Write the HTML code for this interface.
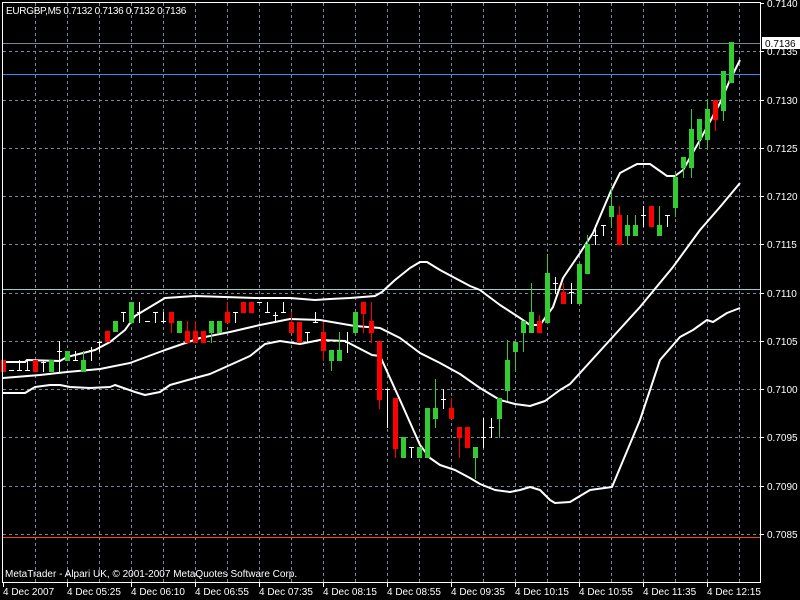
<!DOCTYPE html>
<html><head><meta charset="utf-8"><style>
html,body{margin:0;padding:0;background:#000;width:800px;height:600px;overflow:hidden}
svg{display:block}
text{font-family:"Liberation Sans",sans-serif;font-size:10px;fill:#fff}
</style></head><body>
<svg id="s" width="800" height="600" viewBox="0 0 800 600" shape-rendering="crispEdges">
<rect width="800" height="600" fill="#000"/>
<g id="grid" stroke="#778899" stroke-dasharray="3,3" stroke-width="1"></g>
<line x1="3" y1="43.5" x2="760" y2="43.5" stroke="#778899"/>
<line x1="3" y1="289.5" x2="760" y2="289.5" stroke="#9fc9c9"/>
<line x1="3" y1="74.5" x2="760" y2="74.5" stroke="#1e90ff"/>
<line x1="3" y1="537.5" x2="760" y2="537.5" stroke="#ff4500"/>
<g id="bands" fill="none" stroke="#fff" stroke-width="2" shape-rendering="auto" stroke-linejoin="round"></g>
<g id="c"></g>
<rect x="2.5" y="2.5" width="758" height="580" fill="none" stroke="#fff"/>
<g id="ax" stroke="#fff"></g>
<g id="tx"></g>
<rect x="762" y="37" width="38" height="12" fill="#fff"/>
<text x="765" y="47" style="fill:#000">0.7136</text>
<text x="6" y="14" style="letter-spacing:-0.3px">EURGBP,M5  0.7132 0.7136 0.7132 0.7136</text>
<text x="5" y="577">MetaTrader - Alpari UK, © 2001-2007 MetaQuotes Software Corp.</text>
</svg>
<script>
var NS="http://www.w3.org/2000/svg";
function el(p,n,a,t){var e=document.createElementNS(NS,n);for(var k in a)e.setAttribute(k,a[k]);if(t)e.textContent=t;document.getElementById(p).appendChild(e);return e;}
for(var x=35;x<760;x+=32)el("grid","line",{x1:x+.5,y1:3,x2:x+.5,y2:582});
var prices=["0.7140","0.7135","0.7130","0.7125","0.7120","0.7115","0.7110","0.7105","0.7100","0.7095","0.7090","0.7085"];
for(var i=0;i<12;i++){var y=Math.round(3+i*48.27);if(i>0)el("grid","line",{x1:3,y1:y+.5,x2:760,y2:y+.5});
el("ax","line",{x1:760,y1:y+.5,x2:764,y2:y+.5});el("tx","text",{x:767,y:y+4},prices[i]);}
var dl=["4 Dec 2007","4 Dec 05:25","4 Dec 06:10","4 Dec 06:55","4 Dec 07:35","4 Dec 08:15","4 Dec 08:55","4 Dec 09:35","4 Dec 10:15","4 Dec 10:55","4 Dec 11:35","4 Dec 12:15"];
for(var i=0;i<12;i++){var x=3+64*i;el("ax","line",{x1:x+.5,y1:582,x2:x+.5,y2:587});el("tx","text",{x:x,y:595},dl[i]);}
var up=[[3,362],[25,362],[27,360],[60,361],[67,357],[95,350],[110,342],[125,330],[135,316],[165,298],[195,296],[225,297],[255,298],[290,298],[315,300],[330,299],[350,298],[375,296],[382,292],[395,280],[410,268],[420,262],[427,262],[440,270],[455,278],[470,286],[480,290],[500,305],[520,318],[530,325],[540,325],[553,307],[563,278],[580,253],[593,233],[610,193],[620,173],[637,164],[650,164],[667,176],[675,176],[683,170],[700,140],[720,103],[730,80],[740,60]];
var mid=[[3,378],[40,375],[67,372],[100,369],[130,363],[165,350],[200,338],[230,332],[260,325],[290,319],[320,320],[355,326],[380,328],[400,338],[420,353],[440,363],[460,374],[480,388],[500,400],[515,404],[530,406],[545,401],[560,390],[570,384],[610,340],[640,307],[673,267],[700,230],[720,207],[740,183]];
var lo=[[3,393],[25,393],[35,387],[50,385],[60,385],[70,387],[90,388],[110,387],[115,385],[135,392],[145,395],[160,392],[170,385],[195,378],[210,374],[230,365],[250,356],[265,344],[280,341],[300,344],[320,340],[345,341],[372,355],[380,356],[390,378],[400,400],[420,445],[430,458],[440,465],[455,470],[470,478],[480,484],[495,490],[510,492],[520,490],[530,487],[540,490],[550,500],[555,503],[570,502],[590,490],[612,487],[640,420],[660,360],[680,337],[693,330],[707,320],[713,322],[727,313],[740,308]];
[up,mid,lo].forEach(function(b){el("bands","polyline",{points:b.map(function(p){return p.join(",")}).join(" ")});});
var C=[
["r",360,371,360,371],["d",370,370,370,370],["d",370,370,360,370],["d",370,370,360,370],["r",360,371,360,371],
["d",362,362,360,371],["g",360,371,360,371],["d",351,351,341,371],["g",351,360,351,360],["d",360,360,351,360],
["g",360,371,351,371],["d",350,350,347,360],["d",342,342,341,351],["r",331,341,331,341],["g",321,331,321,331],
["d",312,312,312,321],["g",302,322,302,322],["d",312,312,302,322],["d",321,321,321,321],["d",312,312,312,322],
["d",321,321,312,322],["r",312,322,312,332],["g",321,332,321,332],["r",331,342,321,342],["r",331,342,321,342],
["r",331,342,331,342],["g",321,332,321,342],["g",321,332,321,332],["r",312,322,302,322],["d",312,312,312,322],
["r",302,312,302,312],["r",302,312,302,312],["d",302,302,302,302],["d",312,312,302,312],["d",315,315,312,322],
["d",312,312,302,312],["r",322,332,312,332],["r",322,342,322,342],["d",332,332,332,342],["d",322,322,312,322],
["r",332,350,322,360],["g",350,360,350,370],["g",350,360,332,360],["d",342,342,332,352],["g",312,332,312,332],
["r",302,313,302,332],["r",321,332,302,342],["r",341,399,341,408],["d",389,389,389,427],["r",398,448,398,457],
["g",437,457,437,457],["d",447,447,447,457],["g",447,457,447,457],["g",408,457,408,457],["g",408,418,379,427],
["d",399,399,389,408],["r",408,418,398,418],["r",427,437,427,457],["r",427,447,427,447],["g",447,457,447,478],
["d",437,437,418,447],["d",427,427,418,437],["g",398,418,398,437],["g",360,390,340,400],["g",342,351,342,371],
["g",321,332,321,351],["g",312,332,283,332],["r",321,332,315,332],["g",273,322,254,322],["d",283,283,277,293],
["r",292,303,283,303],["d",292,292,283,303],["g",264,303,264,303],["g",244,273,235,273],["d",235,235,225,244],
["d",225,225,225,235],["g",206,216,187,226],["r",215,244,206,244],["g",225,235,215,244],["g",225,235,215,235],
["d",215,215,206,226],["r",206,226,206,226],["g",225,235,206,235],["d",215,215,215,226],["g",177,207,172,216],
["g",157,167,157,177],["g",129,167,109,177],["g",119,139,119,148],["g",109,139,100,148],["r",100,119,100,130],
["g",71,110,71,120],["g",42,82,42,82]];
C.forEach(function(c,i){var x=3+8*i,col=c[0]=="g"?"#32cd32":c[0]=="r"?"#ff0000":"#fff";
if(c[4]>c[3])el("c","rect",{x:x,y:c[3],width:1,height:c[4]-c[3]+1,fill:col});
if(c[0]=="d")el("c","rect",{x:x-2,y:c[1],width:5,height:1,fill:col});
else el("c","rect",{x:x-2,y:c[1],width:5,height:c[2]-c[1]+1,fill:col});});
</script>
</body></html>
